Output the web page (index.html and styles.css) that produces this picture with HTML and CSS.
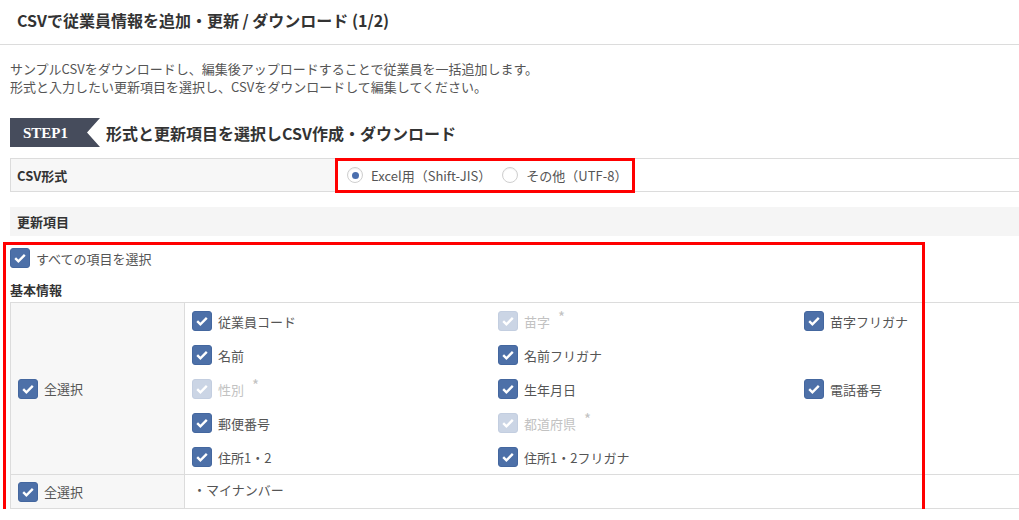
FILE: index.html
```html
<!DOCTYPE html>
<html lang="ja">
<head>
<meta charset="utf-8">
<title>CSVで従業員情報を追加・更新</title>
<link rel="stylesheet" href="styles.css">
</head>
<body>
<header class="page-head">
  <h1 class="title">CSVで従業員情報を追加・更新 / ダウンロード (1/2)</h1>
</header>
<main class="content">
  <p class="desc">サンプルCSVをダウンロードし、編集後アップロードすることで従業員を一括追加します。<br>形式と入力したい更新項目を選択し、CSVをダウンロードして編集してください。</p>

  <div class="step">
    <span class="step-badge">STEP1</span>
    <h2 class="step-title">形式と更新項目を選択しCSV作成・ダウンロード</h2>
  </div>

  <div class="form-row">
    <div class="form-label">CSV形式</div>
    <div class="form-value">
      <div class="radio-group">
        <label class="radio-item"><span class="radio checked"></span>Excel用（Shift-JIS）</label>
        <label class="radio-item"><span class="radio"></span>その他（UTF-8）</label>
      </div>
    </div>
  </div>

  <div class="section-bar">更新項目</div>

  <div class="update-body">
    <div class="annot-frame"></div>
    <label class="check-all"><span class="cb"><svg viewBox="0 0 20 20"><path d="M5.2 10.2 L8.4 13.3 L14.8 6.9"/></svg></span>すべての項目を選択</label>
    <div class="group-title">基本情報</div>
    <div class="tbl">
      <div class="tbl-row">
        <div class="tbl-side"><label class="item"><span class="cb"><svg viewBox="0 0 20 20"><path d="M5.2 10.2 L8.4 13.3 L14.8 6.9"/></svg></span>全選択</label></div>
        <div class="tbl-main items">
          <label class="item"><span class="cb"><svg viewBox="0 0 20 20"><path d="M5.2 10.2 L8.4 13.3 L14.8 6.9"/></svg></span>従業員コード</label>
          <label class="item dis"><span class="cb"><svg viewBox="0 0 20 20"><path d="M5.2 10.2 L8.4 13.3 L14.8 6.9"/></svg></span>苗字<span class="req">*</span></label>
          <label class="item"><span class="cb"><svg viewBox="0 0 20 20"><path d="M5.2 10.2 L8.4 13.3 L14.8 6.9"/></svg></span>苗字フリガナ</label>

          <label class="item"><span class="cb"><svg viewBox="0 0 20 20"><path d="M5.2 10.2 L8.4 13.3 L14.8 6.9"/></svg></span>名前</label>
          <label class="item"><span class="cb"><svg viewBox="0 0 20 20"><path d="M5.2 10.2 L8.4 13.3 L14.8 6.9"/></svg></span>名前フリガナ</label>
          <span class="item"></span>

          <label class="item dis"><span class="cb"><svg viewBox="0 0 20 20"><path d="M5.2 10.2 L8.4 13.3 L14.8 6.9"/></svg></span>性別<span class="req">*</span></label>
          <label class="item"><span class="cb"><svg viewBox="0 0 20 20"><path d="M5.2 10.2 L8.4 13.3 L14.8 6.9"/></svg></span>生年月日</label>
          <label class="item"><span class="cb"><svg viewBox="0 0 20 20"><path d="M5.2 10.2 L8.4 13.3 L14.8 6.9"/></svg></span>電話番号</label>

          <label class="item"><span class="cb"><svg viewBox="0 0 20 20"><path d="M5.2 10.2 L8.4 13.3 L14.8 6.9"/></svg></span>郵便番号</label>
          <label class="item dis"><span class="cb"><svg viewBox="0 0 20 20"><path d="M5.2 10.2 L8.4 13.3 L14.8 6.9"/></svg></span>都道府県<span class="req">*</span></label>
          <span class="item"></span>

          <label class="item"><span class="cb"><svg viewBox="0 0 20 20"><path d="M5.2 10.2 L8.4 13.3 L14.8 6.9"/></svg></span>住所1・2</label>
          <label class="item"><span class="cb"><svg viewBox="0 0 20 20"><path d="M5.2 10.2 L8.4 13.3 L14.8 6.9"/></svg></span>住所1・2フリガナ</label>
          <span class="item"></span>
        </div>
      </div>
      <div class="tbl-row">
        <div class="tbl-side"><label class="item"><span class="cb"><svg viewBox="0 0 20 20"><path d="M5.2 10.2 L8.4 13.3 L14.8 6.9"/></svg></span>全選択</label></div>
        <div class="tbl-main note">・マイナンバー</div>
      </div>
    </div>
  </div>
</main>
</body>
</html>
```
FILE: styles.css
```css
html, body {
  margin: 0;
  padding: 0;
  background: #fff;
}
body {
  font-family: "Noto Sans CJK JP", "Noto Sans", sans-serif;
  font-size: 13px;
  color: #555;
  overflow: hidden;
  width: 1019px;
}
.page-head {
  height: 44px;
  border-bottom: 1px solid #dcdcdc;
  padding-left: 17px;
}
.title {
  margin: 0;
  padding-top: 10px;
  font-size: 16px;
  line-height: 20px;
  font-weight: bold;
  color: #333;
}
.content {
  padding-left: 10px;
}
.desc {
  margin: 15px 0 0;
  line-height: 18px;
  font-size: 13px;
  color: #555;
}
.step {
  margin-top: 22px;
  display: flex;
  align-items: center;
  height: 29px;
}
.step-badge {
  width: 90px;
  height: 29px;
  box-sizing: border-box;
  padding-left: 13px;
  background: #464c5c;
  color: #fff;
  font-family: "Liberation Serif", "DejaVu Serif", serif;
  font-weight: bold;
  font-size: 15px;
  line-height: 30px;
  clip-path: polygon(0 0, 100% 0, calc(100% - 13px) 50%, 100% 100%, 0 100%);
}
.step-title {
  margin: 0 0 0 6px;
  font-size: 16px;
  line-height: 20px;
  font-weight: bold;
  color: #333;
}
.form-row {
  margin-top: 11px;
  display: flex;
  height: 34px;
  box-sizing: border-box;
  border: 1px solid #dcdcdc;
  border-right: none;
}
.form-label {
  width: 326px;
  background: #f7f7f7;
  padding-left: 6px;
  box-sizing: border-box;
  display: flex;
  align-items: center;
  font-weight: bold;
  color: #333;
}
.form-value {
  display: flex;
  align-items: center;
  padding-left: 1px;
}
.radio-group {
  display: flex;
  align-items: center;
  gap: 11px;
  height: 29px;
  padding: 0 5px 0 9px;
  outline: 3px solid #ff0000;
}
.radio-item {
  display: flex;
  align-items: center;
  gap: 8px;
  color: #555;
}
.radio {
  width: 16px;
  height: 16px;
  box-sizing: border-box;
  border: 1px solid #cfcfcf;
  border-radius: 50%;
  background: #fff;
  display: inline-flex;
  align-items: center;
  justify-content: center;
  box-shadow: inset 0 1px 1px rgba(0,0,0,0.06);
}
.radio.checked::after {
  content: "";
  width: 7px;
  height: 7px;
  border-radius: 50%;
  background: #4b6fae;
}
.section-bar {
  margin-top: 15px;
  height: 29px;
  line-height: 29px;
  background: #f5f5f5;
  padding-left: 7px;
  font-weight: bold;
  color: #333;
}
.update-body {
  position: relative;
  padding-top: 12px;
}
.annot-frame {
  position: absolute;
  top: 6px;
  left: -7px;
  width: 922px;
  height: 271px;
  box-sizing: border-box;
  border: 3px solid #ff0000;
  pointer-events: none;
  z-index: 2;
}
.check-all {
  display: flex;
  align-items: center;
  gap: 6px;
  height: 20px;
}
.group-title {
  margin-top: 12px;
  line-height: 20px;
  font-weight: bold;
  color: #333;
}
.tbl {
  margin-top: 2px;
  border-top: 1px solid #dcdcdc;
  border-left: 1px solid #dcdcdc;
}
.tbl-row {
  display: grid;
  grid-template-columns: 174px 1fr;
  border-bottom: 1px solid #dcdcdc;
}
.tbl-side {
  background: #f7f7f7;
  border-right: 1px solid #dcdcdc;
  box-sizing: border-box;
  display: flex;
  align-items: center;
  padding-left: 7px;
}
.items {
  display: grid;
  grid-template-columns: 306px 306px 1fr;
  grid-auto-rows: 34px;
  padding: 1px 0 0 7px;
}
.item {
  display: flex;
  align-items: center;
  gap: 6px;
  color: #555;
}
.note {
  padding: 5px 0 8px 8px;
  line-height: 20px;
}
.cb {
  width: 20px;
  height: 20px;
  box-sizing: border-box;
  border-radius: 3px;
  background: #4d70a8;
  border: 1px solid #44679f;
  display: inline-flex;
  align-items: center;
  justify-content: center;
  flex-shrink: 0;
}
.cb svg {
  width: 20px;
  height: 20px;
  margin: -1px;
}
.cb path {
  fill: none;
  stroke: #fff;
  stroke-width: 2.4;
}
.item.dis {
  color: #c2c2c2;
}
.item.dis .cb {
  background: #cbd5e5;
  border-color: #c3cee0;
}
.req {
  margin: 0 0 9px 2px;
  font-size: 15px;
  line-height: 14px;
  color: #c2c2c2;
}
```
